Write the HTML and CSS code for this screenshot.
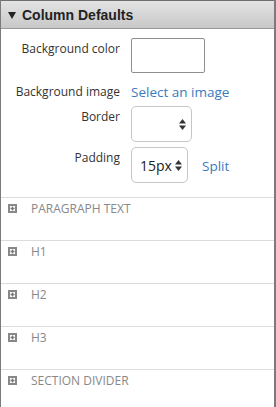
FILE: index.html
```html
<!DOCTYPE html>
<html lang="en">
<head>
    <meta charset="UTF-8">
    <meta name="viewport" content="width=device-width, initial-scale=1.0">
    <title>Column Defaults</title>
    <link rel="stylesheet" href="styles.css">
</head>
<body>
    <div class="panel">
        <!-- Panel header -->
        <div class="panel-head">
            <svg class="caret" width="8" height="7" viewBox="0 0 8 7"><polygon points="0,0 8,0 4,7" fill="#222"/></svg>
            <span>Column Defaults</span>
        </div>

        <!-- Column settings -->
        <div class="panel-body">
            <div class="row">
                <label>Background color</label>
                <div class="swatch"></div>
            </div>
            <div class="row row-link">
                <label>Background image</label>
                <a href="#" class="link">Select an image</a>
            </div>
            <div class="row">
                <label>Border</label>
                <div class="select select-border">
                    <span></span>
                    <svg class="arrows" width="7" height="11" viewBox="0 0 7 11"><polygon points="3.5,0 7,4.5 0,4.5" fill="#333"/><polygon points="0,6.5 7,6.5 3.5,11" fill="#333"/></svg>
                </div>
            </div>
            <div class="row">
                <label>Padding</label>
                <div class="controls">
                    <div class="select select-padding">
                        <span>15px</span>
                        <svg class="arrows" width="7" height="11" viewBox="0 0 7 11"><polygon points="3.5,0 7,4.5 0,4.5" fill="#333"/><polygon points="0,6.5 7,6.5 3.5,11" fill="#333"/></svg>
                    </div>
                    <a href="#" class="link">Split</a>
                </div>
            </div>
        </div>

        <!-- Collapsed sections -->
        <div class="section"><svg class="plus" width="9" height="9" viewBox="0 0 9 9"><rect x="1" y="1" width="7" height="7" fill="none" stroke="#888" stroke-width="2"/><path d="M2.5 4.5h4M4.5 2.5v4" stroke="#777" stroke-width="1.4"/></svg><span>PARAGRAPH TEXT</span></div>
        <div class="section"><svg class="plus" width="9" height="9" viewBox="0 0 9 9"><rect x="1" y="1" width="7" height="7" fill="none" stroke="#888" stroke-width="2"/><path d="M2.5 4.5h4M4.5 2.5v4" stroke="#777" stroke-width="1.4"/></svg><span>H1</span></div>
        <div class="section"><svg class="plus" width="9" height="9" viewBox="0 0 9 9"><rect x="1" y="1" width="7" height="7" fill="none" stroke="#888" stroke-width="2"/><path d="M2.5 4.5h4M4.5 2.5v4" stroke="#777" stroke-width="1.4"/></svg><span>H2</span></div>
        <div class="section"><svg class="plus" width="9" height="9" viewBox="0 0 9 9"><rect x="1" y="1" width="7" height="7" fill="none" stroke="#888" stroke-width="2"/><path d="M2.5 4.5h4M4.5 2.5v4" stroke="#777" stroke-width="1.4"/></svg><span>H3</span></div>
        <div class="section"><svg class="plus" width="9" height="9" viewBox="0 0 9 9"><rect x="1" y="1" width="7" height="7" fill="none" stroke="#888" stroke-width="2"/><path d="M2.5 4.5h4M4.5 2.5v4" stroke="#777" stroke-width="1.4"/></svg><span>SECTION DIVIDER</span></div>
    </div>
</body>
</html>
```

FILE: styles.css
```css
body {
    margin: 0;
    padding: 0;
    background-color: #fff;
    font-family: "Open Sans", Arial, sans-serif;
    color: #333;
    overflow: hidden;
}

.panel {
    width: 276px;
    box-sizing: border-box;
    border-left: 1px solid #7b7b7b;
    border-right: 2px solid #7b7b7b;
    background-color: #fff;
}

.panel-head {
    height: 27px;
    display: flex;
    align-items: center;
    gap: 6px;
    padding-left: 7px;
    border-top: 1px solid #6f6f6f;
    border-bottom: 1px solid #9a9a9a;
    background: linear-gradient(#e3e3e3, #c8c8c8);
    font-family: "Liberation Sans", Arial, sans-serif;
    font-weight: bold;
    font-size: 14px;
    color: #222;
}

.caret {
    display: block;
    margin-top: 1px;
}

.panel-body {
    padding: 9px 0 14px;
}

.row {
    display: grid;
    grid-template-columns: 119px auto;
    column-gap: 11px;
    align-items: start;
}

.row + .row {
    margin-top: 5px;
}

.row label {
    text-align: right;
    font-size: 12px;
    line-height: 18px;
    padding-top: 2px;
    color: #333;
}

.row-link {
    padding-top: 3px;
}

.link {
    color: #3a7bbf;
    text-decoration: none;
    font-size: 13.5px;
    line-height: 18px;
    padding-top: 2px;
}

.swatch {
    width: 72px;
    height: 33px;
    border: 1px solid #8e8e8e;
    border-radius: 2px;
}

.controls {
    display: flex;
    align-items: center;
    gap: 14px;
}

.select {
    height: 34px;
    box-sizing: content-box;
    display: flex;
    align-items: center;
    justify-content: space-between;
    padding: 0 5px 0 8px;
    border: 1px solid #c6c6c6;
    border-radius: 5px;
    background-color: #fff;
    font-size: 14px;
    color: #222;
}

.select-border {
    width: 46px;
}

.select-padding {
    width: 42px;
}

.arrows {
    display: block;
}

.section {
    height: 42px;
    border-top: 1px solid #dcdcdc;
    display: flex;
    align-items: flex-start;
    gap: 14px;
    padding-left: 7px;
    font-size: 12px;
    line-height: 15px;
    color: #888;
}

.section .plus {
    margin-top: 6px;
    flex: none;
}

.section span {
    padding-top: 3px;
}
```
